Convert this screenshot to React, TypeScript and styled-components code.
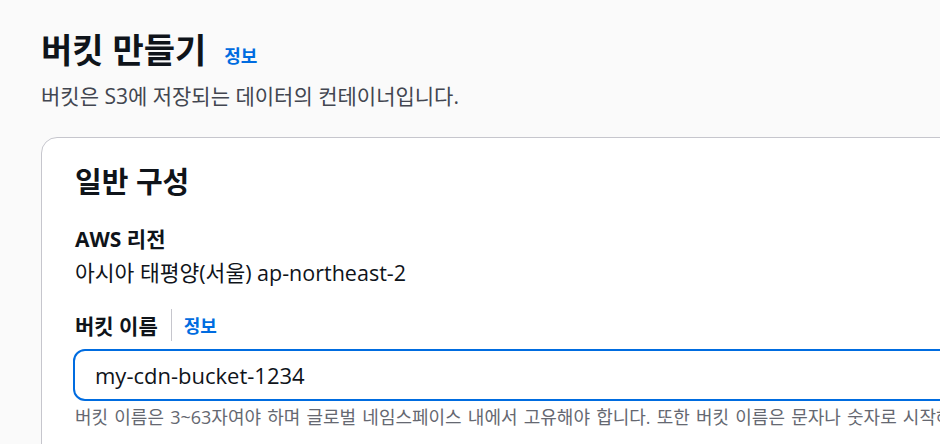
import styled, { createGlobalStyle } from "styled-components";

const GlobalStyle = createGlobalStyle`
  html, body {
    margin: 0;
    padding: 0;
    background: #fafafa;
    font-family: "Open Sans", "Noto Sans CJK KR", sans-serif;
    overflow: hidden;
  }
`;

// 레이아웃
const Page = styled.div`
  width: 940px;
  height: 444px;
  overflow: hidden;
  padding: 27px 0 0 41px;
  box-sizing: border-box;
`;

const Header = styled.header`
  display: flex;
  flex-direction: column;
  gap: 9px;
`;

const TitleRow = styled.div`
  display: flex;
  align-items: baseline;
  gap: 18px;
`;

const Title = styled.h1`
  margin: 0;
  font-size: 34px;
  line-height: 46px;
  font-weight: 700;
  color: #0f141a;
`;

const InfoLink = styled.a`
  font-size: 18px;
  font-weight: 700;
  color: #006ce0;
  text-decoration: none;
  cursor: pointer;
`;

const Description = styled.p`
  margin: 0;
  font-size: 21px;
  line-height: 28px;
  color: #424650;
`;

const Card = styled.section`
  margin-top: 27px;
  width: 1000px;
  height: 400px;
  background: #ffffff;
  border: 1px solid #c6c6cd;
  border-radius: 16px;
  padding: 24px 32px 0 33px;
  box-sizing: border-box;
`;

const CardTitle = styled.h2`
  margin: 0 0 20px;
  font-size: 29px;
  line-height: 40px;
  font-weight: 700;
  color: #0f141a;
`;

const Field = styled.div`
  display: flex;
  flex-direction: column;
  margin-bottom: 21px;
`;

const LabelRow = styled.div`
  display: flex;
  align-items: center;
  height: 32px;
`;

const Label = styled.span`
  font-size: 21px;
  font-weight: 700;
  color: #0f141a;
`;

const Divider = styled.span`
  width: 1px;
  height: 32px;
  background: #c6c6cd;
  margin: 0 12px 0 13px;
`;

const Value = styled.div`
  font-size: 21.5px;
  line-height: 30px;
  color: #0f141a;
  margin-top: 4px;
`;

const Input = styled.input`
  margin: 8px 0 0 -2px;
  height: 52px;
  width: 900px;
  box-sizing: border-box;
  border: 2px solid #006ce0;
  border-radius: 12px;
  padding: 0 20px;
  font-family: inherit;
  font-size: 22px;
  color: #0f141a;
  background: #fff;
  outline: none;
`;

const Hint = styled.div`
  margin-top: 4px;
  font-size: 18px;
  line-height: 24px;
  word-spacing: 1.5px;
  color: #656871;
  white-space: nowrap;
`;

export default function App() {
  return (
    <Page>
      <GlobalStyle />
      <Header>
        <TitleRow>
          <Title>버킷 만들기</Title>
          <InfoLink>정보</InfoLink>
        </TitleRow>
        <Description>버킷은 S3에 저장되는 데이터의 컨테이너입니다.</Description>
      </Header>
      <Card>
        <CardTitle>일반 구성</CardTitle>
        <Field>
          <LabelRow>
            <Label>AWS 리전</Label>
          </LabelRow>
          <Value>아시아 태평양(서울) ap-northeast-2</Value>
        </Field>
        <Field>
          <LabelRow>
            <Label>버킷 이름</Label>
            <Divider />
            <InfoLink>정보</InfoLink>
          </LabelRow>
          <Input defaultValue="my-cdn-bucket-1234" readOnly />
          <Hint>
            버킷 이름은 3~63자여야 하며 글로벌 네임스페이스 내에서 고유해야 합니다. 또한 버킷 이름은 문자나 숫자로 시작해야 합니다.
          </Hint>
        </Field>
      </Card>
    </Page>
  );
}
